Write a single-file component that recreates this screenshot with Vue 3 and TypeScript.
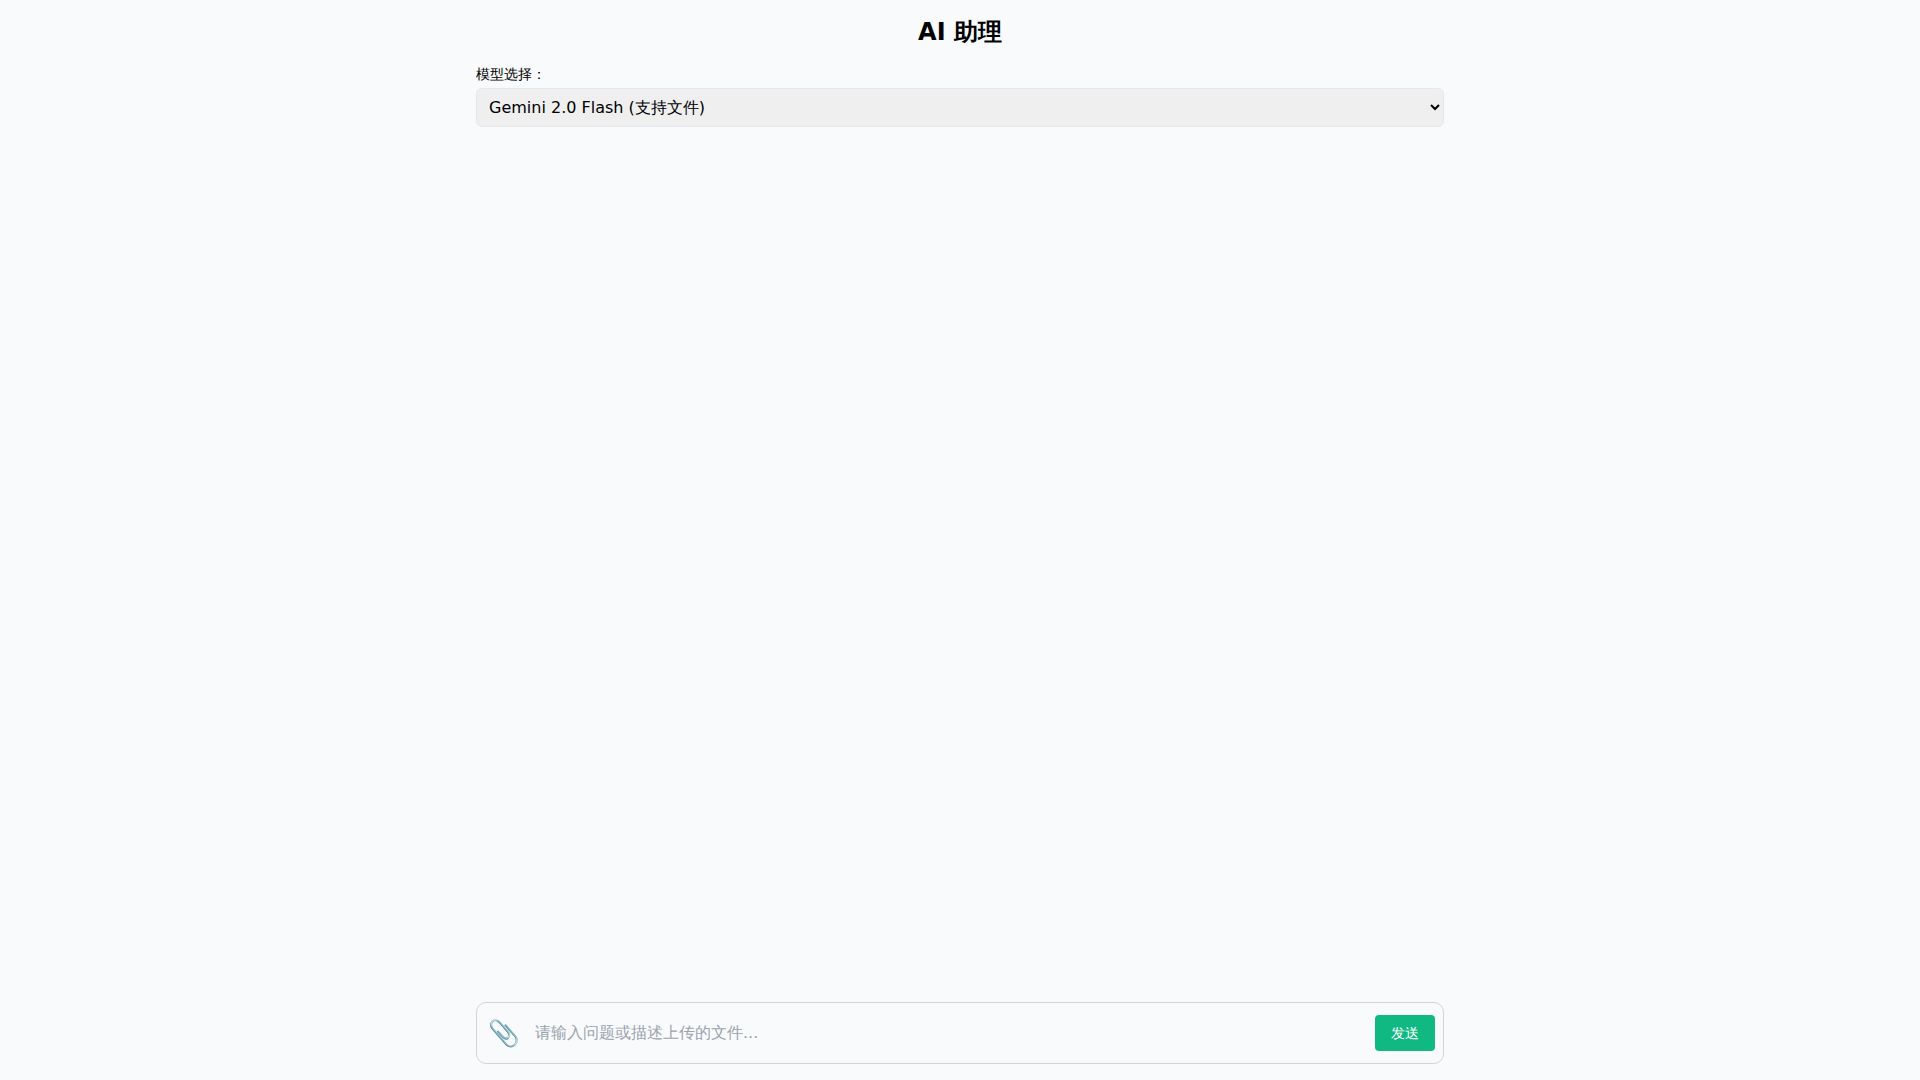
<script setup lang="ts">
import { ref } from 'vue'
const models = ['Gemini 2.0 Flash (支持文件)']
const model = ref(models[0])
const text = ref('')
</script>

<template>
  <div class="page">
    <h1 class="title">AI 助理</h1>
    <div class="field">
      <label class="label">模型选择：</label>
      <select v-model="model" class="select">
        <option v-for="m in models" :key="m" :value="m">{{ m }}</option>
      </select>
    </div>
    <div class="messages"></div>
    <form class="composer" @submit.prevent>
      <button type="button" class="attach" aria-label="上传文件">📎</button>
      <input v-model="text" class="input" placeholder="请输入问题或描述上传的文件..." />
      <button type="submit" class="send">发送</button>
    </form>
  </div>
</template>

<style scoped>
.page {
  box-sizing: border-box;
  width: 1000px;
  height: 1080px;
  margin: 0 auto;
  padding: 16px;
  display: flex;
  flex-direction: column;
  color: #000;
}
.title {
  margin: 0 0 16px;
  font-size: 24px;
  line-height: 32px;
  font-weight: 700;
  text-align: center;
}
.field {
  display: flex;
  flex-direction: column;
}
.label {
  font-size: 14px;
  line-height: 20px;
  margin-bottom: 4px;
}
.select {
  width: 100%;
  height: 39px;
  box-sizing: border-box;
  padding: 8px;
  font: inherit;
  font-size: 16px;
  color: #000;
  background: #efefef;
  border: 1px solid #e5e7eb;
  border-radius: 6px;
}
.messages {
  flex: 1;
  min-height: 0;
}
.composer {
  display: flex;
  align-items: center;
  gap: 8px;
  box-sizing: border-box;
  height: 62px;
  padding: 0 8px 0 12px;
  border: 1px solid #d1d5db;
  border-radius: 10px;
  background: #f9fafb;
}
.attach {
  display: flex;
  align-items: center;
  justify-content: center;
  width: 30px;
  height: 30px;
  padding: 0;
  border: 0;
  background: transparent;
  font: inherit;
  font-size: 25.6px;
  line-height: 30px;
  opacity: 0.85;
}
.input {
  flex: 1;
  min-width: 0;
  padding: 7px 8px 9px;
  border: 0;
  outline: 0;
  background: transparent;
  font: inherit;
  font-size: 16px;
}
.input::placeholder {
  color: #9ca3af;
  opacity: 1;
}
.send {
  width: 60px;
  height: 36px;
  padding: 2px 0 0;
  border: 0;
  border-radius: 4px;
  background: #10b981;
  color: #fff;
  font: inherit;
  font-size: 14px;
}
</style>

<style>
html, body {
  margin: 0;
  background: #f9fafb;
  font-family: "DejaVu Sans", sans-serif;
}
</style>
